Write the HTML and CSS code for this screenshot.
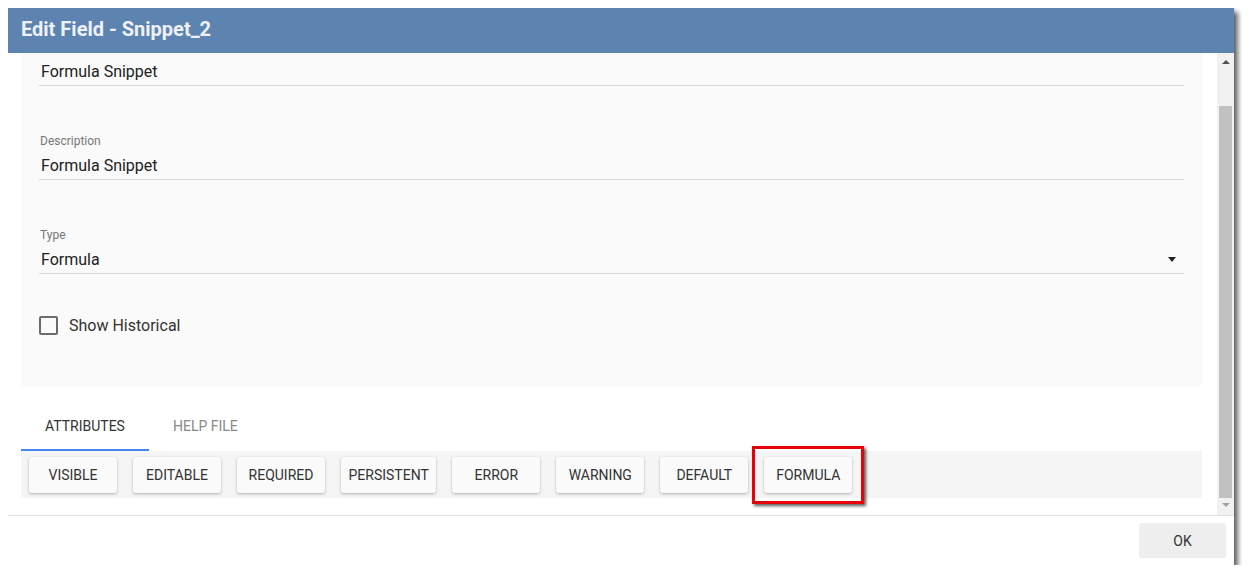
FILE: index.html
```html
<!DOCTYPE html>
<html lang="en">
<head>
    <meta charset="UTF-8">
    <title>Edit Field - Snippet_2</title>
    <link rel="stylesheet" href="styles.css">
</head>
<body>
    <div class="dialog">
        <div class="dialog-header">Edit Field - Snippet_2</div>

        <div class="dialog-main">
            <div id="scroller" class="scroller">
                <div class="panel">
                    <div class="field">
                        <label class="field-label">Name</label>
                        <div class="field-value">Formula Snippet</div>
                    </div>
                    <div class="field">
                        <label class="field-label">Description</label>
                        <div class="field-value">Formula Snippet</div>
                    </div>
                    <div class="field">
                        <label class="field-label">Type</label>
                        <div class="field-value select">
                            Formula
                            <span class="caret"></span>
                        </div>
                    </div>
                    <div class="check-row">
                        <span class="checkbox"></span>
                        <span class="check-label">Show Historical</span>
                    </div>
                </div>

                <div class="tabs">
                    <div class="tab active">ATTRIBUTES</div>
                    <div class="tab">HELP FILE</div>
                </div>
                <div class="button-strip">
                    <button class="btn">VISIBLE</button>
                    <button class="btn">EDITABLE</button>
                    <button class="btn">REQUIRED</button>
                    <button class="btn">PERSISTENT</button>
                    <button class="btn">ERROR</button>
                    <button class="btn">WARNING</button>
                    <button class="btn">DEFAULT</button>
                    <button class="btn highlighted">FORMULA</button>
                </div>
            </div>

            <div class="scrollbar">
                <span class="arrow-up"></span>
                <div class="track">
                    <div class="thumb"></div>
                </div>
                <span class="arrow-down"></span>
            </div>
        </div>

        <div class="dialog-footer">
            <button class="ok-btn">OK</button>
        </div>
    </div>

    <script>
        const scroller = document.getElementById('scroller');
        scroller.scrollTop = scroller.scrollHeight; // list is scrolled to the bottom
    </script>
</body>
</html>
```

FILE: styles.css
```css
body {
    margin: 8px;
    font-family: Roboto, "Liberation Sans", sans-serif;
    background: #fff;
}

.dialog {
    width: 1226px;
    height: 557px;
    display: flex;
    flex-direction: column;
    background: #fff;
    box-shadow: 0 0 2px rgba(0, 0, 0, 0.25), 4px 4px 5px rgba(0, 0, 0, 0.6);
}

.dialog-header {
    height: 45px;
    flex: none;
    background: #5d83b0;
    color: #eef2f7;
    font-size: 20px;
    font-weight: bold;
    line-height: 42px;
    padding-left: 13px;
}

.dialog-main {
    height: 462px;
    flex: none;
    display: flex;
}

.scroller {
    flex: 1;
    overflow: hidden;
    padding: 0 15px 17px 13px;
}

.panel {
    background: #fafafa;
    padding: 24px 18px 44px 18px;
}

.field {
    margin-bottom: 47px;
}

.field-label {
    display: block;
    font-size: 12px;
    line-height: 16px;
    color: #777;
    margin-bottom: 5px;
    padding-left: 1px;
}

.field-value {
    font-size: 16px;
    line-height: 24px;
    color: #222;
    padding: 0 2px 1px 2px;
    border-bottom: 1px solid #d9d9d9;
}

.select {
    position: relative;
}

.caret {
    position: absolute;
    right: 8px;
    top: 9px;
    width: 0;
    height: 0;
    border-left: 4px solid transparent;
    border-right: 4px solid transparent;
    border-top: 5px solid #222;
}

.check-row {
    display: flex;
    align-items: center;
    height: 34px;
    margin-top: -13px;
}

.checkbox {
    width: 15px;
    height: 15px;
    border: 2px solid #6b6b6b;
    border-radius: 2px;
    margin-right: 11px;
}

.check-label {
    font-size: 16px;
    color: #333;
}

.tabs {
    display: flex;
    margin-top: 16px;
    height: 49px;
}

.tab {
    padding: 2px 24px 0 24px;
    font-size: 14px;
    line-height: 45px;
    color: #888;
    border-bottom: 2px solid transparent;
}

.tab.active {
    color: #333;
    border-bottom-color: #4285f4;
}

.button-strip {
    display: flex;
    gap: 16px;
    background: #f5f5f5;
    padding: 6px 8px 5px 8px;
}

.btn {
    position: relative;
    min-width: 88px;
    height: 36px;
    padding: 0 7.5px;
    border: none;
    border-radius: 3px;
    background: #fafafa;
    box-shadow: 0 1px 3px rgba(0, 0, 0, 0.28);
    font-family: Roboto, "Liberation Sans", sans-serif;
    font-size: 14px;
    color: #333;
}

.highlighted::after {
    content: "";
    position: absolute;
    top: -11px;
    left: -12px;
    right: -12px;
    bottom: -11px;
    border: 3px solid #e8000b;
    box-shadow: 2px 2px 3px rgba(0, 0, 0, 0.65);
}

.scrollbar {
    width: 17px;
    flex: none;
    background: #f1f1f1;
    display: flex;
    flex-direction: column;
    align-items: center;
}

.arrow-up {
    margin-top: 7px;
    width: 0;
    height: 0;
    border-left: 4px solid transparent;
    border-right: 4px solid transparent;
    border-bottom: 4px solid #505050;
}

.track {
    flex: 1;
    width: 100%;
    display: flex;
    flex-direction: column;
    justify-content: flex-end;
    align-items: center;
    padding-bottom: 5px;
}

.thumb {
    width: 13px;
    height: 392px;
    background: #c1c1c1;
}

.arrow-down {
    margin-bottom: 8px;
    width: 0;
    height: 0;
    border-left: 4px solid transparent;
    border-right: 4px solid transparent;
    border-top: 4px solid #a3a3a3;
}

.dialog-footer {
    flex: 1;
    border-top: 1px solid #e0e0e0;
    display: flex;
    justify-content: flex-end;
    align-items: flex-start;
    padding: 7px 8px 0 0;
}

.ok-btn {
    width: 87px;
    height: 35px;
    border: none;
    border-radius: 3px;
    background: #eeeeee;
    font-family: Roboto, "Liberation Sans", sans-serif;
    font-size: 14px;
    color: #333;
}
```
